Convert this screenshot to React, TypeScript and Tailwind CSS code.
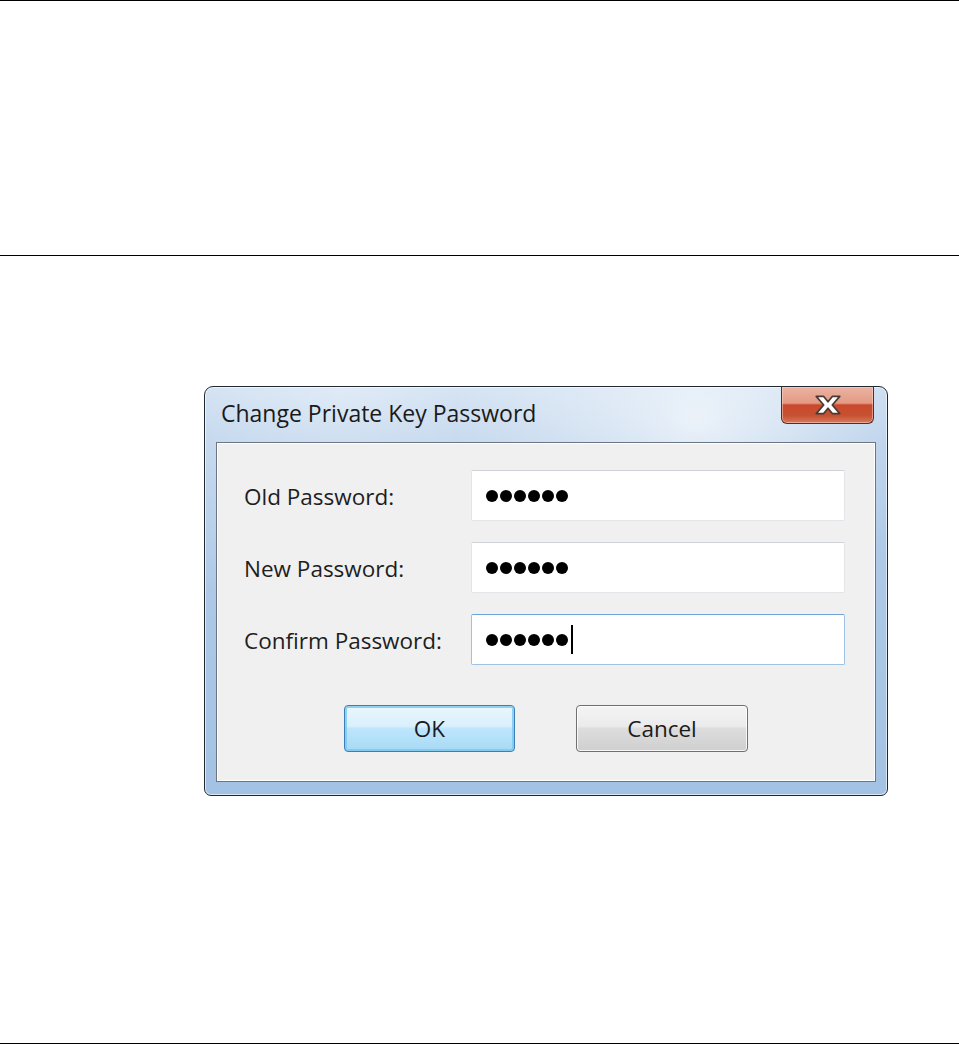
import React from "react";

const font = { fontFamily: '"Open Sans", "Noto Sans", sans-serif' };

function Dots({ cursor }: { cursor?: boolean }) {
  return (
    <div className="flex items-center gap-[2px] pl-[14px]">
      {[0, 1, 2, 3, 4, 5].map((i) => (
        <span key={i} className="block h-[12px] w-[12px] rounded-full bg-black" />
      ))}
      {cursor && <span className="ml-[1px] block h-[29px] w-[2px] bg-black" />}
    </div>
  );
}

function Field({ label, focused, cursor }: { label: string; focused?: boolean; cursor?: boolean }) {
  return (
    <>
      <div className="flex items-center pt-[3px] text-[22.5px] text-[#1e1e1e]">{label}</div>
      <div
        className={
          "flex h-[51px] items-center rounded-[2px] border bg-white " +
          (focused
            ? "border-[#9cc2e6] border-t-[#6fa3d3]"
            : "border-[#e3e5e8] border-t-[#cfd2d6]")
        }
      >
        <Dots cursor={cursor} />
      </div>
    </>
  );
}

export default function App() {
  return (
    <div className="flex h-[1044px] w-[959px] flex-col bg-white" style={font}>
      <div className="h-px w-full bg-black" />
      <div className="h-[254px]" />
      <div className="h-px w-full bg-black" />
      <div className="h-[130px]" />
      <div className="pl-[204px]">
        <div className="flex h-[410px] w-[684px] flex-col rounded-t-[9px] rounded-b-[7px] border border-[#22282f] bg-[radial-gradient(ellipse_at_72%_8%,rgba(255,255,255,0.7),transparent_35%),radial-gradient(ellipse_at_20%_0%,rgba(255,255,255,0.45),transparent_40%),linear-gradient(180deg,#c6daef_0%,#b4cde9_14%,#a3c2e3_100%)] px-[11px] pb-[13px] shadow-[inset_0_0_0_1px_rgba(255,255,255,0.6)]">
          <div className="flex h-[55px] items-start">
            <div className="self-center pb-[2px] pl-[5px] text-[23px] text-[#1a1a1a]">
              Change Private Key Password
            </div>
            <div className="ml-auto mr-[2px] flex h-[37px] w-[93px] items-center justify-center rounded-b-[6px] border border-t-0 border-[#5b2a22] bg-[linear-gradient(180deg,#eab3a2_0%,#e39a84_45%,#c9482c_50%,#c75233_80%,#d77a5f_100%)] shadow-[inset_0_0_0_1px_rgba(255,220,210,0.5)]">
              <svg width="30" height="22" viewBox="0 0 28 20">
                <path
                  d="M3 2 H10 L14 7 L18 2 H25 L18 10 L25 18 H18 L14 13 L10 18 H3 L10 10 Z"
                  fill="#ffffff"
                  stroke="#4a3a36"
                  strokeWidth="1.6"
                  strokeLinejoin="round"
                />
              </svg>
            </div>
          </div>
          <div className="flex-1 border border-[#6a7683] bg-[#f0f0f0] shadow-[inset_0_0_0_1px_#ffffff]">
            <div className="grid grid-cols-[227px_374px] gap-y-[21px] pl-[27px] pt-[27px]">
              <Field label="Old Password:" />
              <Field label="New Password:" />
              <Field label="Confirm Password:" focused cursor />
            </div>
            <div className="flex justify-center gap-[61px] pt-[40px]">
              <button className="flex h-[47px] w-[171px] items-center justify-center rounded-[4px] border border-[#3d7fb4] bg-[linear-gradient(180deg,#eaf6fd_0%,#d9f0fc_45%,#bee6fd_50%,#a7d9f5_100%)] text-[22.5px] text-[#1a1a1a] shadow-[inset_0_0_0_2px_rgba(120,200,240,0.8)]">
                OK
              </button>
              <button className="flex h-[47px] w-[172px] items-center justify-center rounded-[4px] border border-[#707070] bg-[linear-gradient(180deg,#f4f4f4_0%,#ebebeb_45%,#dddddd_50%,#cfcfcf_100%)] text-[22.5px] text-[#1a1a1a] shadow-[inset_0_0_0_1px_rgba(255,255,255,0.8)]">
                Cancel
              </button>
            </div>
          </div>
        </div>
      </div>
      <div className="flex-1" />
      <div className="h-px w-full bg-black" />
    </div>
  );
}
